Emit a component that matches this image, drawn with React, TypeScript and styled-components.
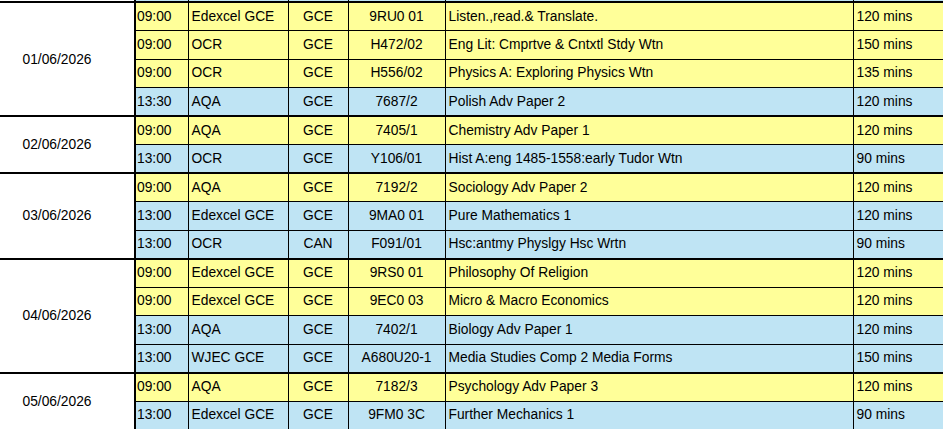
import styled, { createGlobalStyle } from "styled-components";

type Session = {
  time: string;
  board: string;
  qual: string;
  code: string;
  title: string;
  duration: string;
};

type Day = {
  date: string;
  sessions: Session[];
};

const days: Day[] = [
  {
    date: "01/06/2026",
    sessions: [
      { time: "09:00", board: "Edexcel GCE", qual: "GCE", code: "9RU0 01", title: "Listen.,read.& Translate.", duration: "120 mins" },
      { time: "09:00", board: "OCR", qual: "GCE", code: "H472/02", title: "Eng Lit: Cmprtve & Cntxtl Stdy Wtn", duration: "150 mins" },
      { time: "09:00", board: "OCR", qual: "GCE", code: "H556/02", title: "Physics A: Exploring Physics Wtn", duration: "135 mins" },
      { time: "13:30", board: "AQA", qual: "GCE", code: "7687/2", title: "Polish Adv Paper 2", duration: "120 mins" },
    ],
  },
  {
    date: "02/06/2026",
    sessions: [
      { time: "09:00", board: "AQA", qual: "GCE", code: "7405/1", title: "Chemistry Adv Paper 1", duration: "120 mins" },
      { time: "13:00", board: "OCR", qual: "GCE", code: "Y106/01", title: "Hist A:eng 1485-1558:early Tudor Wtn", duration: "90 mins" },
    ],
  },
  {
    date: "03/06/2026",
    sessions: [
      { time: "09:00", board: "AQA", qual: "GCE", code: "7192/2", title: "Sociology Adv Paper 2", duration: "120 mins" },
      { time: "13:00", board: "Edexcel GCE", qual: "GCE", code: "9MA0 01", title: "Pure Mathematics 1", duration: "120 mins" },
      { time: "13:00", board: "OCR", qual: "CAN", code: "F091/01", title: "Hsc:antmy Physlgy Hsc Wrtn", duration: "90 mins" },
    ],
  },
  {
    date: "04/06/2026",
    sessions: [
      { time: "09:00", board: "Edexcel GCE", qual: "GCE", code: "9RS0 01", title: "Philosophy Of Religion", duration: "120 mins" },
      { time: "09:00", board: "Edexcel GCE", qual: "GCE", code: "9EC0 03", title: "Micro & Macro Economics", duration: "120 mins" },
      { time: "13:00", board: "AQA", qual: "GCE", code: "7402/1", title: "Biology Adv Paper 1", duration: "120 mins" },
      { time: "13:00", board: "WJEC GCE", qual: "GCE", code: "A680U20-1", title: "Media Studies Comp 2 Media Forms", duration: "150 mins" },
    ],
  },
  {
    date: "05/06/2026",
    sessions: [
      { time: "09:00", board: "AQA", qual: "GCE", code: "7182/3", title: "Psychology Adv Paper 3", duration: "120 mins" },
      { time: "13:00", board: "Edexcel GCE", qual: "GCE", code: "9FM0 3C", title: "Further Mechanics 1", duration: "90 mins" },
    ],
  },
];

const GlobalStyle = createGlobalStyle`
  html, body {
    margin: 0;
    padding: 0;
    background: #ffffff;
    overflow: hidden;
  }
`;

const App = () => {
  return (
    <>
      <GlobalStyle />
      <Viewport>
        <Timetable>
          <colgroup>
            <col style={{ width: 155 }} />
            <col style={{ width: 53 }} />
            <col style={{ width: 100 }} />
            <col style={{ width: 60 }} />
            <col style={{ width: 97 }} />
            <col style={{ width: 408 }} />
            <col style={{ width: 120 }} />
          </colgroup>
          <tbody>
            <LeadRow>
              <LeadCell $blank />
              <LeadCell $first />
              <LeadCell />
              <LeadCell />
              <LeadCell />
              <LeadCell />
              <LeadCell />
            </LeadRow>
            {days.map((day) =>
              day.sessions.map((s, i) => {
                const morning = s.time.startsWith("09");
                return (
                  <Row key={day.date + i}>
                    {i === 0 && (
                      <DateCell rowSpan={day.sessions.length}>{day.date}</DateCell>
                    )}
                    <TimeCell $am={morning} $top={i === 0}>{s.time}</TimeCell>
                    <Cell $am={morning} $top={i === 0}>{s.board}</Cell>
                    <Cell $am={morning} $top={i === 0} $center>{s.qual}</Cell>
                    <Cell $am={morning} $top={i === 0} $center>{s.code}</Cell>
                    <Cell $am={morning} $top={i === 0}>{s.title}</Cell>
                    <Cell $am={morning} $top={i === 0}>{s.duration}</Cell>
                  </Row>
                );
              })
            )}
          </tbody>
        </Timetable>
      </Viewport>
    </>
  );
};

const Viewport = styled.div`
  width: 943px;
  height: 429px;
  overflow: hidden;
  font-family: "Liberation Sans", Arial, sans-serif;
  font-size: 13.8px;
  color: #000000;
`;

const Timetable = styled.table`
  margin-left: -20px;
  table-layout: fixed;
  border-collapse: collapse;
  width: 993px;
`;

const LeadRow = styled.tr`
  height: 1px;
`;

const LeadCell = styled.td<{ $blank?: boolean; $first?: boolean }>`
  padding: 0;
  height: 1px;
  font-size: 0;
  line-height: 0;
  background: ${(p) => (p.$blank ? "#ffffff" : "#bfe4f4")};
  border-left: ${(p) => (p.$first ? "2px solid #000" : p.$blank ? "none" : "1px solid #000")};
`;

const Row = styled.tr`
  height: 28.5px;
`;

const DateCell = styled.td`
  background: #ffffff;
  text-align: center;
  vertical-align: middle;
  padding: 0;
  border-top: 2px solid #000;
  border-bottom: 2px solid #000;
  border-right: 2px solid #000;
  white-space: nowrap;
`;

const Cell = styled.td<{ $am: boolean; $top: boolean; $center?: boolean }>`
  background: ${(p) => (p.$am ? "#ffff99" : "#bfe4f4")};
  border: 1px solid #000;
  border-top: ${(p) => (p.$top ? "2px" : "1px")} solid #000;
  padding: 0 3px;
  text-align: ${(p) => (p.$center ? "center" : "left")};
  vertical-align: middle;
  white-space: nowrap;
  overflow: hidden;
  line-height: 16px;
`;

const TimeCell = styled(Cell)`
  border-left: 2px solid #000;
  padding-left: 1px;
`;

export default App;
